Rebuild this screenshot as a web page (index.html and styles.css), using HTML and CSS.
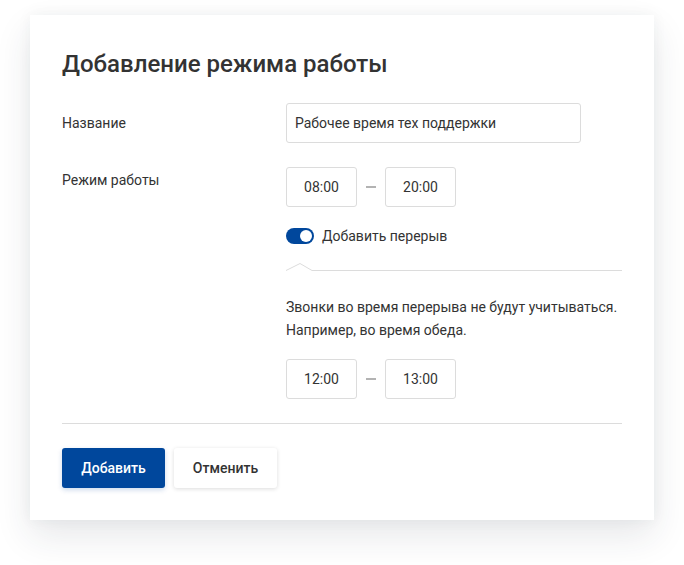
FILE: index.html
```html
<!DOCTYPE html>
<html lang="ru">
<head>
<meta charset="utf-8">
<title>Добавление режима работы</title>
<link rel="stylesheet" href="styles.css">
</head>
<body>
<div class="page">
  <div class="card">
    <h1 class="title">Добавление режима работы</h1>
    <div class="row row-name">
      <div class="label">Название</div>
      <div class="field">
        <div class="input">Рабочее время тех поддержки</div>
      </div>
    </div>
    <div class="row row-mode">
      <div class="label label-top">Режим работы</div>
      <div class="field">
        <div class="times">
          <div class="time">08:00</div>
          <span class="dash"></span>
          <div class="time">20:00</div>
        </div>
        <div class="toggle-row">
          <span class="toggle"><span class="knob"></span></span>
          <span class="toggle-label">Добавить перерыв</span>
        </div>
        <svg class="caret-line" width="336" height="9" viewBox="0 0 336 9">
          <polyline points="0,8.5 14,1.5 26,8.5 336,8.5" fill="none" stroke="#dcdcdc" stroke-width="1"/>
        </svg>
        <p class="note">Звонки во время перерыва не будут учитываться.<br>Например, во время обеда.</p>
        <div class="times">
          <div class="time">12:00</div>
          <span class="dash"></span>
          <div class="time">13:00</div>
        </div>
      </div>
    </div>
    <div class="divider"></div>
    <div class="actions">
      <button class="btn btn-primary">Добавить</button>
      <button class="btn btn-secondary">Отменить</button>
    </div>
  </div>
</div>
</body>
</html>
```
FILE: styles.css
```css
* { box-sizing: border-box; }
html, body { margin: 0; padding: 0; background: #fff; }
body {
  font-family: Roboto, "Noto Sans", Arial, sans-serif;
  color: #333;
  font-size: 14px;
}
.page {
  padding: 15px 30px 45px 30px;
  width: 684px;
  min-height: 565px;
}
.card {
  width: 624px;
  background: #fff;
  padding: 35px 32px 32px 32px;
  box-shadow: 0 16px 34px rgba(40, 50, 60, 0.11), 0 0 14px rgba(40, 50, 60, 0.05);
}
.title {
  margin: 0;
  font-size: 24px;
  font-weight: 500;
  line-height: 28px;
  color: #333;
}
.row {
  display: grid;
  grid-template-columns: 224px 1fr;
}
.row-name {
  margin-top: 25px;
  align-items: center;
}
.row-mode {
  margin-top: 24px;
  align-items: start;
}
.label {
  font-size: 14px;
  line-height: 20px;
  color: #333;
}
.label-top { padding-top: 3px; }
.input {
  width: 295px;
  height: 40px;
  border: 1px solid #dcdcdc;
  border-radius: 3px;
  padding: 0 8px;
  display: flex;
  align-items: center;
  font-size: 14px;
  color: #333;
}
.times {
  display: flex;
  align-items: center;
}
.time {
  width: 71px;
  height: 40px;
  border: 1px solid #dcdcdc;
  border-radius: 3px;
  display: flex;
  align-items: center;
  justify-content: center;
  font-size: 14px;
  color: #333;
}
.dash {
  width: 28px;
  display: flex;
  justify-content: center;
}
.dash::before {
  content: "";
  width: 10px;
  height: 2px;
  background: #b3b3b3;
}
.toggle-row {
  margin-top: 21px;
  display: flex;
  align-items: center;
  height: 16px;
}
.toggle {
  width: 28px;
  height: 16px;
  border-radius: 8px;
  background: #00479c;
  position: relative;
  display: inline-block;
}
.knob {
  position: absolute;
  right: 2px;
  top: 2px;
  width: 12px;
  height: 12px;
  border-radius: 50%;
  background: #fff;
}
.toggle-label {
  margin-left: 8px;
  font-size: 14px;
  line-height: 16px;
  color: #333;
}
.caret-line {
  display: block;
  margin-top: 18px;
}
.note {
  margin: 25px 0 17px 0;
  font-size: 14px;
  line-height: 23px;
  color: #333;
}
.divider {
  margin-top: 24px;
  height: 1px;
  background: #dcdcdc;
}
.actions {
  margin-top: 24px;
  display: flex;
  gap: 9px;
}
.btn {
  width: 103px;
  height: 40px;
  border-radius: 3px;
  font-family: Roboto, "Noto Sans", Arial, sans-serif;
  font-size: 14px;
  font-weight: 500;
  border: none;
  cursor: pointer;
}
.btn-primary {
  background: #00479c;
  color: #fff;
  box-shadow: 0 2px 5px rgba(0, 71, 156, 0.2);
}
.btn-secondary {
  background: #fff;
  color: #333;
  box-shadow: 0 1px 4px rgba(0, 0, 0, 0.14);
}
```
